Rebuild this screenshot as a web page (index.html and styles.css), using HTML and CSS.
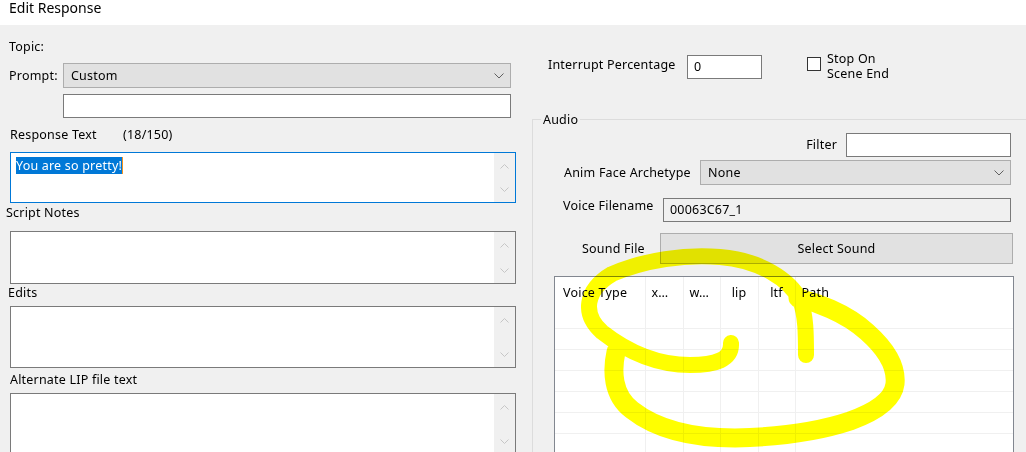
FILE: index.html
```html
<!DOCTYPE html>
<html lang="en">
<head>
    <meta charset="UTF-8">
    <title>Edit Response</title>
    <link rel="stylesheet" href="styles.css">
</head>
<body>
    <div class="titlebar">Edit Response</div>

    <div class="dialog">
        <div class="col-left">
            <div class="label topic-label">Topic:</div>
            <div class="prompt-row">
                <span class="label prompt-label">Prompt:</span>
                <div class="combo prompt-combo">
                    <span>Custom</span>
                    <svg class="chevron" width="10" height="6" viewBox="0 0 10 6"><path d="M0.5 0.5l4.5 4.5 4.5-4.5" fill="none" stroke="#606060"/></svg>
                </div>
            </div>
            <div class="textbox prompt-text"></div>

            <div class="label resp-label"><span class="resp-name">Response Text</span><span>(18/150)</span></div>
            <div class="memo memo-resp focused">
                <div class="memo-body"><span class="sel">You are so pretty!</span></div>
                <div class="memo-scroll">
                    <svg width="9" height="5" viewBox="0 0 9 5"><path d="M0.5 4.5l4-4 4 4" fill="none" stroke="#c6c6c6"/></svg>
                    <svg width="9" height="5" viewBox="0 0 9 5"><path d="M0.5 0.5l4 4 4-4" fill="none" stroke="#c6c6c6"/></svg>
                </div>
            </div>

            <div class="label notes-label">Script Notes</div>
            <div class="memo memo-notes">
                <div class="memo-body"></div>
                <div class="memo-scroll">
                    <svg width="9" height="5" viewBox="0 0 9 5"><path d="M0.5 4.5l4-4 4 4" fill="none" stroke="#c6c6c6"/></svg>
                    <svg width="9" height="5" viewBox="0 0 9 5"><path d="M0.5 0.5l4 4 4-4" fill="none" stroke="#c6c6c6"/></svg>
                </div>
            </div>

            <div class="label edits-label">Edits</div>
            <div class="memo memo-edits">
                <div class="memo-body"></div>
                <div class="memo-scroll">
                    <svg width="9" height="5" viewBox="0 0 9 5"><path d="M0.5 4.5l4-4 4 4" fill="none" stroke="#c6c6c6"/></svg>
                    <svg width="9" height="5" viewBox="0 0 9 5"><path d="M0.5 0.5l4 4 4-4" fill="none" stroke="#c6c6c6"/></svg>
                </div>
            </div>

            <div class="label lip-label">Alternate LIP file text</div>
            <div class="memo memo-lip">
                <div class="memo-body"></div>
                <div class="memo-scroll">
                    <svg width="9" height="5" viewBox="0 0 9 5"><path d="M0.5 4.5l4-4 4 4" fill="none" stroke="#c6c6c6"/></svg>
                    <svg width="9" height="5" viewBox="0 0 9 5"><path d="M0.5 0.5l4 4 4-4" fill="none" stroke="#c6c6c6"/></svg>
                </div>
            </div>
        </div>

        <div class="col-right">
            <div class="interrupt-row">
                <span class="label interrupt-label">Interrupt Percentage</span>
                <div class="textbox interrupt-input">0</div>
                <div class="checkbox"></div>
                <div class="check-label">Stop On<br>Scene End</div>
            </div>

            <div class="group">
                <div class="group-title">Audio</div>

                <div class="filter-row">
                    <span class="label">Filter</span>
                    <div class="textbox filter-input"></div>
                </div>

                <div class="field-row anim-row">
                    <span class="label">Anim Face Archetype</span>
                    <div class="combo anim-combo">
                        <span>None</span>
                        <svg class="chevron" width="10" height="6" viewBox="0 0 10 6"><path d="M0.5 0.5l4.5 4.5 4.5-4.5" fill="none" stroke="#606060"/></svg>
                    </div>
                </div>

                <div class="field-row voice-row">
                    <span class="label">Voice Filename</span>
                    <div class="textbox readonly voice-input">00063C67_1</div>
                </div>

                <div class="field-row sound-row">
                    <span class="label">Sound File</span>
                    <div class="button sound-button">Select Sound</div>
                </div>

                <div class="listview">
                    <table>
                        <colgroup>
                            <col class="c-type">
                            <col class="c-small">
                            <col class="c-small2">
                            <col class="c-small">
                            <col class="c-small2">
                            <col>
                        </colgroup>
                        <thead>
                            <tr>
                                <th>Voice Type</th>
                                <th>x…</th>
                                <th>w…</th>
                                <th class="center">lip</th>
                                <th class="center">ltf</th>
                                <th>Path</th>
                            </tr>
                        </thead>
                        <tbody>
                            <tr><td></td><td></td><td></td><td></td><td></td><td></td></tr>
                            <tr><td></td><td></td><td></td><td></td><td></td><td></td></tr>
                            <tr><td></td><td></td><td></td><td></td><td></td><td></td></tr>
                            <tr><td></td><td></td><td></td><td></td><td></td><td></td></tr>
                            <tr><td></td><td></td><td></td><td></td><td></td><td></td></tr>
                            <tr><td></td><td></td><td></td><td></td><td></td><td></td></tr>
                            <tr><td></td><td></td><td></td><td></td><td></td><td></td></tr>
                        </tbody>
                    </table>
                </div>
            </div>
        </div>
    </div>

    <!-- highlighter scribble drawn over the screenshot -->
    <svg class="scribble" width="1026" height="452" viewBox="0 0 1026 452">
        <path d="M731 343 C732 360 715 365 690 365 C655 365 625 350 602 332 C582 314 585 290 612 274 C645 260 685 254 720 257 C760 260 790 280 800 300 C806 315 806 335 806 355" />
        <path class="outer" d="M798 298 C815 302 845 312 867 332 C885 348 897 365 895 384 C893 400 875 412 850 421 C820 431 780 437 735 438 C690 438 655 428 632 410 C612 395 612 370 616 352" />
    </svg>
</body>
</html>
```

FILE: styles.css
```css
body {
    margin: 0;
    width: 1026px;
    height: 452px;
    overflow: hidden;
    position: relative;
    background: #f0f0f0;
    font-family: "Noto Sans", sans-serif;
    font-size: 12.5px;
    letter-spacing: 0.2px;
    color: #000000;
}

.titlebar {
    height: 25px;
    background: #ffffff;
    font-size: 14px;
    line-height: 15px;
    padding-left: 9px;
    letter-spacing: 0;
}

.dialog {
    display: flex;
    height: 427px;
}

.label {
    line-height: 16px;
    white-space: nowrap;
}

/* left column */

.col-left {
    width: 532px;
    display: flex;
    flex-direction: column;
}

.col-left > *,
.col-right > *,
.group > * {
    flex-shrink: 0;
}

.topic-label {
    margin: 14px 0 0 9px;
}

.prompt-row {
    display: flex;
    align-items: center;
    margin: 8px 0 0 9px;
}

.prompt-label {
    width: 54px;
}

.combo {
    box-sizing: border-box;
    height: 25px;
    background: #e1e1e1;
    border: 1px solid #adadad;
    display: flex;
    align-items: center;
    justify-content: space-between;
    padding: 0 6px 0 7px;
}

.prompt-combo {
    width: 448px;
}

.textbox {
    box-sizing: border-box;
    height: 24px;
    background: #ffffff;
    border: 1px solid #7a7a7a;
    line-height: 22px;
    padding-left: 6px;
}

.textbox.readonly {
    background: #f0f0f0;
}

.prompt-text {
    width: 448px;
    margin: 6px 0 0 63px;
}

.resp-label {
    display: flex;
    margin: 9px 0 0 10px;
}

.resp-name {
    width: 113px;
}

.memo {
    box-sizing: border-box;
    width: 506px;
    margin-left: 10px;
    display: flex;
    background: #ffffff;
    border: 1px solid #7a7a7a;
}

.memo.focused {
    border-color: #0078d7;
}

.memo-body {
    flex: 1;
    padding: 5px 0 0 5px;
    line-height: 15px;
}

.sel {
    background: #0078d7;
    color: #ffffff;
    border-right: 1px solid #f7941d;
}

.memo-scroll {
    width: 21px;
    background: #f0f0f0;
    display: flex;
    flex-direction: column;
    align-items: center;
    justify-content: space-between;
    padding: 11px 0 10px;
}

.memo-resp {
    height: 51px;
    margin-top: 9px;
}

.notes-label {
    margin: 2px 0 0 6px;
}

.memo-notes {
    height: 53px;
    margin-top: 10px;
}

.edits-label {
    margin: 1px 0 0 8px;
}

.memo-edits {
    height: 62px;
    margin-top: 5px;
}

.lip-label {
    margin: 4px 0 0 10px;
}

.memo-lip {
    height: 62px;
    margin-top: 5px;
}

/* right column */

.col-right {
    flex: 1;
    display: flex;
    flex-direction: column;
}

.interrupt-row {
    display: flex;
    align-items: flex-start;
    height: 24px;
    margin: 30px 0 0 16px;
}

.interrupt-label {
    width: 139px;
    margin-top: 2px;
}

.interrupt-input {
    width: 75px;
}

.checkbox {
    box-sizing: border-box;
    width: 14px;
    height: 14px;
    margin: 2px 0 0 45px;
    background: #ffffff;
    border: 1px solid #333333;
}

.check-label {
    line-height: 15px;
    margin: -4px 0 0 6px;
}

.group {
    margin-top: 40px;
    border-top: 1px solid #dcdcdc;
    border-left: 1px solid #dcdcdc;
    display: flex;
    flex-direction: column;
    flex: 1;
}

.group-title {
    align-self: flex-start;
    margin: -8px 0 0 8px;
    padding: 0 2px;
    line-height: 16px;
    background: #f0f0f0;
}

.filter-row {
    display: flex;
    align-items: center;
    justify-content: flex-end;
    margin: 5px 15px 0 0;
}

.filter-input {
    width: 165px;
    margin-left: 9px;
}

.field-row {
    display: flex;
    align-items: center;
    justify-content: space-between;
    margin-right: 15px;
}

.anim-row {
    margin-top: 3px;
    padding-left: 31px;
}

.anim-combo {
    width: 311px;
}

.voice-row {
    margin-top: 13px;
    padding-left: 30px;
    align-items: flex-start;
}

.voice-input {
    width: 348px;
}

.sound-row {
    margin-top: 11px;
    margin-right: 13px;
    padding-left: 49px;
}

.button {
    box-sizing: border-box;
    height: 31px;
    background: #e1e1e1;
    border: 1px solid #adadad;
    display: flex;
    align-items: center;
    justify-content: center;
}

.sound-button {
    width: 353px;
}

.listview {
    box-sizing: border-box;
    width: 460px;
    height: 200px;
    margin: 12px 0 0 21px;
    background: #ffffff;
    border: 1px solid #828790;
    overflow: hidden;
}

.listview table {
    width: 100%;
    table-layout: fixed;
    border-collapse: collapse;
}

.c-type {
    width: 90px;
}

.c-small {
    width: 38px;
}

.c-small2 {
    width: 37px;
}

.listview th {
    height: 31px;
    padding: 0 0 0 6px;
    font-weight: normal;
    text-align: left;
    white-space: nowrap;
    border-right: 1px solid #f0f0f0;
}

.listview th:first-child {
    padding-left: 8px;
}

.listview th.center {
    text-align: center;
    padding: 0;
}

.listview td {
    height: 20px;
    padding: 0;
    border-right: 1px solid #f0f0f0;
    border-bottom: 1px solid #f0f0f0;
}

.listview th:last-child,
.listview td:last-child {
    border-right: none;
}

.scribble {
    position: absolute;
    left: 0;
    top: 0;
    pointer-events: none;
    mix-blend-mode: multiply;
}

.scribble path {
    fill: none;
    stroke: #ffff00;
    stroke-width: 16;
    stroke-linecap: round;
    stroke-linejoin: round;
}

.scribble path.outer {
    stroke-width: 19;
}
```
